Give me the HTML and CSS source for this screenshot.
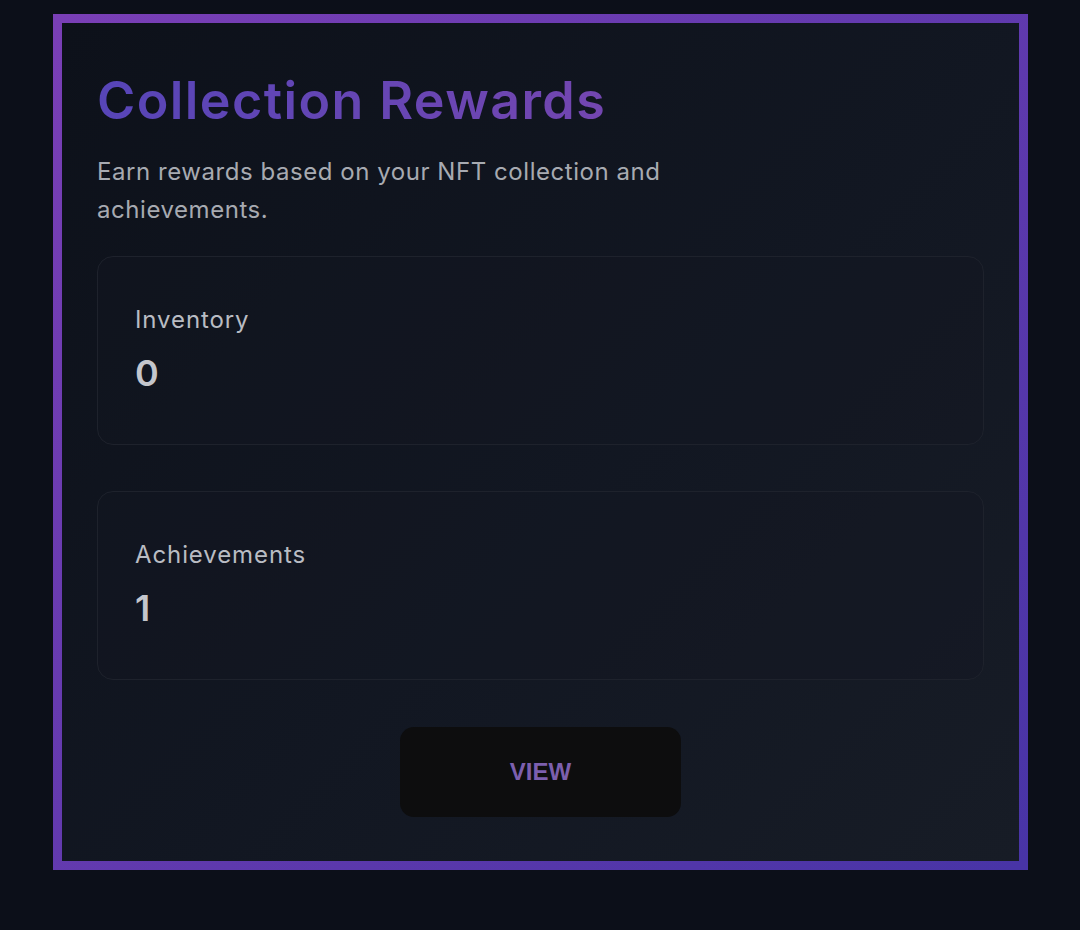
FILE: index.html
```html
<!DOCTYPE html>
<html lang="en">
<head>
<meta charset="UTF-8">
<title>Collection Rewards</title>
<link rel="stylesheet" href="styles.css">
</head>
<body>
<div class="reward-box">
<h1 class="reward-title">Collection Rewards</h1>
<p class="reward-desc">Earn rewards based on your NFT collection and achievements.</p>
<div class="stat-list">
<div class="stat-card">
<div class="stat-label">Inventory</div>
<div class="stat-value">0</div>
</div>
<div class="stat-card">
<div class="stat-label">Achievements</div>
<div class="stat-value">1</div>
</div>
</div>
<div class="btn-area">
<button type="button" id="btnView">VIEW</button>
</div>
</div>
</body>
</html>
```

FILE: styles.css
```css
html, body { margin: 0; padding: 0; box-sizing: border-box; }
*, *::before, *::after { box-sizing: inherit; }
body { background: #0c0f19; font-family: 'Inter', 'Noto Sans', sans-serif; min-height: 930px; padding: 14px 0 0 53px; }
.reward-box { width: 975px; padding: 47px 35px 44px; border: 9px solid transparent; border-image: linear-gradient(135deg, #7a3fb6, #4834a6) 1; background: linear-gradient(135deg, #0d111a 0%, #121722 55%, #171c26 100%); }
.reward-title { margin: 0; font-size: 52px; line-height: 62px; font-weight: 600; letter-spacing: 1.4px; background: linear-gradient(90deg, #5745b8, #7346b0); -webkit-background-clip: text; background-clip: text; color: transparent; width: max-content; }
.reward-desc { margin: 21px 0 0; max-width: 670px; font-size: 24px; line-height: 38px; letter-spacing: 0.55px; color: #a7aab1; }
.stat-list { margin-top: 27px; display: flex; flex-direction: column; gap: 46px; }
.stat-card { padding: 45px 37px 47px; border: 1px solid #1e222c; border-radius: 16px; background: rgba(20, 24, 33, 0.35); }
.stat-label { font-size: 24px; line-height: 36px; letter-spacing: 0.9px; color: #b9bcc3; }
.stat-value { margin-top: 12px; font-size: 36px; line-height: 47px; font-weight: 600; color: #c4c6cc; }
.btn-area { margin-top: 47px; text-align: center; }
.btn-area button { display: inline-block; vertical-align: top; width: 281px; height: 90px; border: none; border-radius: 14px; background: #0d0d0e; color: #7c5fae; font-family: 'Liberation Sans', Arial, sans-serif; font-size: 24px; font-weight: 700; cursor: pointer; }
```
